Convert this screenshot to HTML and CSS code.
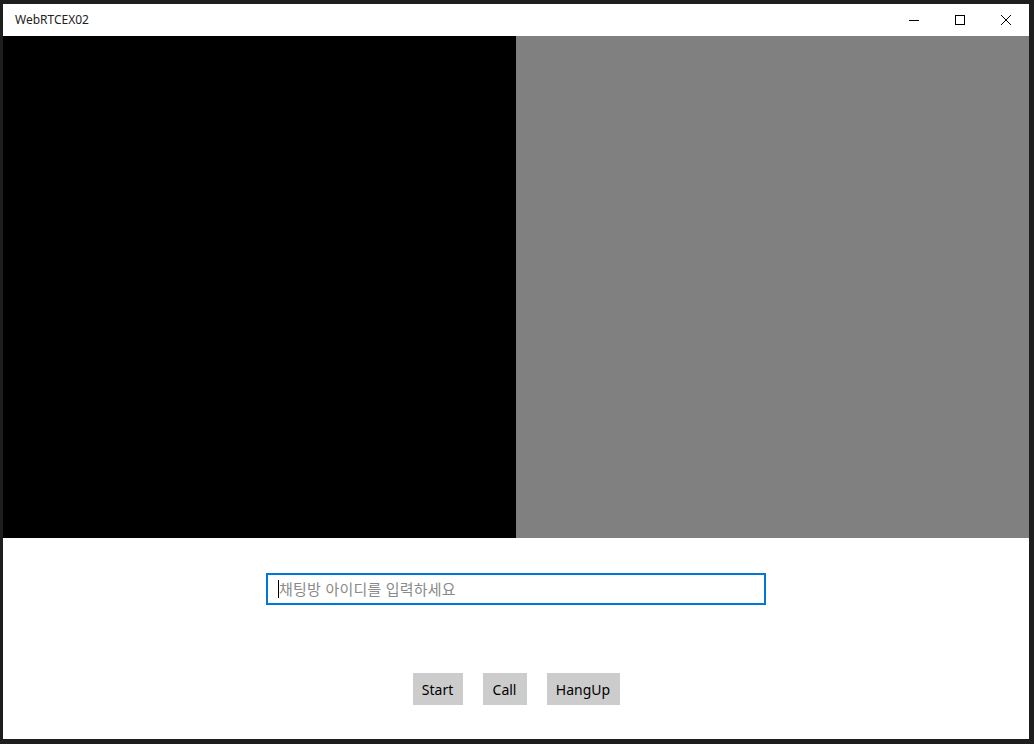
FILE: index.html
```html
<!DOCTYPE html>
<html lang="ko">
<head>
<meta charset="utf-8">
<title>WebRTCEX02</title>
<link rel="stylesheet" href="styles.css">
</head>
<body>
<div class="desktop">
  <div class="window">
    <div class="titlebar">
      <span class="title">WebRTCEX02</span>
      <div class="controls">
        <div class="ctl"><svg width="10" height="10" viewBox="0 0 10 10"><path d="M0 5.5H10" stroke="#000" stroke-width="1"/></svg></div>
        <div class="ctl"><svg width="10" height="10" viewBox="0 0 10 10"><rect x="0.5" y="0.5" width="9" height="9" fill="none" stroke="#000" stroke-width="1"/></svg></div>
        <div class="ctl"><svg width="10" height="10" viewBox="0 0 10 10"><path d="M0 0L10 10M10 0L0 10" stroke="#000" stroke-width="1"/></svg></div>
      </div>
    </div>
    <div class="videos">
      <div class="video local"></div>
      <div class="video remote"></div>
    </div>
    <div class="panel">
      <div class="inputbox">
        <span class="caret"></span>
        <span class="placeholder">채팅방 아이디를 입력하세요</span>
      </div>
      <div class="buttons">
        <button class="btn btn-start">Start</button>
        <button class="btn btn-call">Call</button>
        <button class="btn btn-hang">HangUp</button>
      </div>
    </div>
  </div>
</div>
</body>
</html>
```

FILE: styles.css
```css
html, body {
  margin: 0;
  padding: 0;
  background: #1e1e1e;
  width: 1034px;
  height: 744px;
  overflow: hidden;
  font-family: "Noto Sans", "Noto Sans CJK KR", sans-serif;
}
.desktop {
  padding: 4px 0 0 3px;
}
.window {
  width: 1026px;
  height: 735px;
  background: #ffffff;
  display: flex;
  flex-direction: column;
}
.titlebar {
  height: 32px;
  display: flex;
  align-items: center;
  justify-content: space-between;
  background: #ffffff;
}
.title {
  font-size: 12px;
  color: #222;
  padding-left: 12px;
  line-height: 32px;
}
.controls {
  display: flex;
  height: 32px;
}
.ctl {
  width: 46px;
  height: 32px;
  display: flex;
  align-items: center;
  justify-content: center;
}
.videos {
  display: flex;
  height: 502px;
}
.video {
  flex: 1;
}
.local { background: #000000; }
.remote { background: #808080; }
.panel {
  flex: 1;
  display: flex;
  flex-direction: column;
  align-items: center;
  padding-top: 35px;
}
.inputbox {
  box-sizing: border-box;
  width: 500px;
  height: 32px;
  border: 2px solid #0078d7;
  display: flex;
  align-items: center;
  padding-left: 10px;
}
.caret {
  width: 1px;
  height: 18px;
  background: #000;
  margin-right: 0;
}
.placeholder {
  font-size: 15px;
  letter-spacing: 0.2px;
  color: #8a8a8a;
  font-family: "Noto Sans CJK KR", sans-serif;
  line-height: 18px;
  margin-top: -1px;
}
.buttons {
  display: flex;
  gap: 20px;
  margin-top: 68px;
}
.btn {
  height: 32px;
  border: none;
  background: #cccccc;
  font-family: "Noto Sans", sans-serif;
  font-size: 14px;
  color: #000;
  padding: 0;
}
.btn-start { width: 50px; }
.btn-call { width: 44px; }
.btn-hang { width: 73px; }
```
